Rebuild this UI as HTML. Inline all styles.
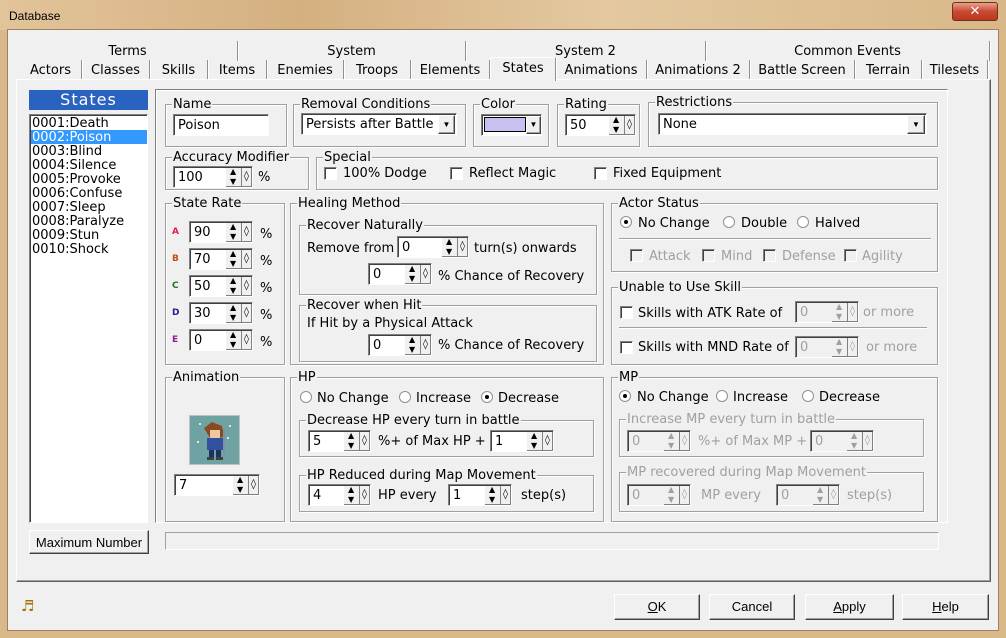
<!DOCTYPE html>
<html><head><meta charset="utf-8"><style>
*{box-sizing:border-box;margin:0;padding:0}
body{width:1006px;height:638px;overflow:hidden;background:#d9b88a;font-family:"DejaVu Sans","Liberation Sans",sans-serif;font-size:13px;color:#000;position:relative}
.a{position:absolute;white-space:nowrap;line-height:16px;margin-top:2px}
.g{position:absolute;border:1px solid #a0a0a0;box-shadow:1px 1px 0 #fff, inset 1px 1px 0 #fff}
.g>.t{position:absolute;top:-8px;left:6px;background:#f0f0f0;padding:0 1px;line-height:16px;white-space:nowrap}
.in{position:absolute;background:#fff;border:1px solid;border-color:#808080 #fff #fff #808080;box-shadow:inset 1px 1px 0 #404040;height:22px;line-height:19px;padding-left:4px;padding-top:1px;white-space:nowrap}
.sp{position:absolute;background:#fff;border:1px solid;border-color:#808080 #fff #fff #808080;box-shadow:inset 1px 1px 0 #404040;height:22px;line-height:20px;padding-left:4px;padding-top:1px}
.sp .ar{position:absolute;right:10px;top:1px;width:16px;height:19px;background:#f0f0f0;border-right:1px solid #808080;border-bottom:1px solid #808080}
.sp .ar:before{content:"▲";position:absolute;left:4px;top:-6px;font-size:8px}
.sp .ar:after{content:"▼";position:absolute;left:4px;top:4px;font-size:8px}
.sp .dm{position:absolute;right:0;top:1px;width:10px;height:19px;background:#f0f0f0;border-right:1px solid #808080;border-bottom:1px solid #808080;font-size:10px;line-height:17px;text-align:center;font-style:normal}
.dis{color:#a0a0a0}
.sp.dis{background:#f0f0f0}
.cb{position:absolute;width:13px;height:13px;background:#fff;border:1px solid;border-color:#808080 #fff #fff #808080;box-shadow:inset 1px 1px 0 #404040}
.cb.dis{background:#f0f0f0}
.rd{position:absolute;width:12px;height:12px;border-radius:50%;background:#fff;border:1px solid #909090}
.rd.on:after{content:"";position:absolute;left:3px;top:3px;width:4px;height:4px;border-radius:50%;background:#000}
.btn{position:absolute;background:#f0f0f0;border:1px solid;border-color:#fff #404040 #404040 #fff;box-shadow:inset -1px -1px 0 #a0a0a0;text-align:center;line-height:24px;font-family:"Liberation Sans",sans-serif;font-size:13px}
.tab{position:absolute;text-align:center;line-height:18px;border-right:1px solid #909090;box-shadow:1px 0 0 #fff;padding-top:2px}
.sep{position:absolute;height:2px;border-top:1px solid #a0a0a0;border-bottom:1px solid #fff}
</style></head><body>
<div style="position:absolute;left:0;top:0;width:1006px;height:30px;background:linear-gradient(90deg,#e2c49a,#d4b080 30%,#e4c8a0 60%,#d8b888)"></div>
<div class="a" style="left:9px;top:6px;font-family:'Liberation Sans',sans-serif;font-size:12px">Database</div>
<div style="position:absolute;left:952px;top:2px;width:46px;height:19px;border-radius:3px;background:linear-gradient(#e8a090,#c84a30 50%,#b83820);border:1px solid #703020;color:#fff;text-align:center;font-weight:bold;line-height:17px;font-size:13px">✕</div>
<div style="position:absolute;left:7px;top:29px;width:992px;height:602px;background:#f0f0f0;border:1px solid #a08060"></div>

<div class="tab" style="left:18px;top:41px;width:220px">Terms</div>
<div class="tab" style="left:238px;top:41px;width:228px">System</div>
<div class="tab" style="left:466px;top:41px;width:240px">System 2</div>
<div class="tab" style="left:706px;top:41px;width:284px">Common Events</div>
<div class="tab" style="left:20px;top:60px;width:62px">Actors</div>
<div class="tab" style="left:82px;top:60px;width:68px">Classes</div>
<div class="tab" style="left:150px;top:60px;width:58px">Skills</div>
<div class="tab" style="left:208px;top:60px;width:59px">Items</div>
<div class="tab" style="left:267px;top:60px;width:77px">Enemies</div>
<div class="tab" style="left:344px;top:60px;width:67px">Troops</div>
<div class="tab" style="left:411px;top:60px;width:79px">Elements</div>
<div class="tab" style="left:490px;top:57px;width:66px;background:#f0f0f0;border-left:1px solid #fff;border-top:1px solid #fff;z-index:2;height:24px">States</div>
<div class="tab" style="left:556px;top:60px;width:91px">Animations</div>
<div class="tab" style="left:647px;top:60px;width:103px">Animations 2</div>
<div class="tab" style="left:750px;top:60px;width:105px">Battle Screen</div>
<div class="tab" style="left:855px;top:60px;width:67px">Terrain</div>
<div class="tab" style="left:922px;top:60px;width:66px">Tilesets</div>
<div style="position:absolute;left:16px;top:79px;width:975px;height:503px;border:1px solid;border-color:#fff #606060 #606060 #fff;box-shadow:inset -1px -1px 0 #a0a0a0"></div>

<div style="position:absolute;left:29px;top:90px;width:119px;height:20px;background:#2a62c0;color:#fff;text-align:center;font-size:16px;line-height:20px;letter-spacing:1px">States</div>
<div style="position:absolute;left:29px;top:114px;width:119px;height:409px;background:#fff;border:1px solid;border-color:#808080 #fff #fff #808080;box-shadow:inset 1px 1px 0 #404040"></div>
<div style="position:absolute;left:31px;top:130px;width:116px;height:14px;background:#3399ff"></div>
<div class="a" style="left:32px;top:115px;line-height:14px">0001:Death<br><span style="color:#fff">0002:Poison</span><br>0003:Blind<br>0004:Silence<br>0005:Provoke<br>0006:Confuse<br>0007:Sleep<br>0008:Paralyze<br>0009:Stun<br>0010:Shock</div>
<div class="btn" style="left:29px;top:530px;width:120px;height:24px">Maximum Number</div>

<div style="position:absolute;left:155px;top:89px;width:793px;height:434px;border:1px solid;border-color:#808080 #fff #fff #808080;box-shadow:inset 1px 1px 0 #fff"></div>
<div style="position:absolute;left:165px;top:532px;width:774px;height:18px;border:1px solid;border-color:#a0a0a0 #fff #fff #a0a0a0"></div>

<div class="g" style="left:165px;top:104px;width:122px;height:43px"><span class="t">Name</span></div>
<div class="in" style="left:173px;top:114px;width:96px">Poison</div>
<div class="g" style="left:293px;top:104px;width:173px;height:43px"><span class="t">Removal Conditions</span></div>
<div class="in" style="left:301px;top:113px;width:156px">Persists after Battle</div>
<div class="btn" style="left:438px;top:115px;width:17px;height:19px;line-height:17px;font-size:8px">▼</div>
<div class="g" style="left:473px;top:104px;width:76px;height:43px"><span class="t">Color</span></div>
<div class="in" style="left:481px;top:114px;width:61px"></div>
<div style="position:absolute;left:484px;top:117px;width:42px;height:15px;background:#c8c0f0;border:1px solid #000"></div>
<div class="btn" style="left:526px;top:116px;width:15px;height:18px;line-height:16px;font-size:8px">▼</div>
<div class="g" style="left:557px;top:104px;width:83px;height:43px"><span class="t">Rating</span></div>
<div class="sp" style="left:565px;top:114px;width:71px">50<i class="ar"></i><i class="dm">◊</i></div>
<div class="g" style="left:648px;top:102px;width:290px;height:45px"><span class="t">Restrictions</span></div>
<div class="in" style="left:658px;top:113px;width:269px">None</div>
<div class="btn" style="left:907px;top:115px;width:18px;height:19px;line-height:17px;font-size:8px">▼</div>

<div class="g" style="left:165px;top:157px;width:144px;height:33px"><span class="t">Accuracy Modifier</span></div>
<div class="sp" style="left:173px;top:166px;width:80px">100<i class="ar"></i><i class="dm">◊</i></div>
<div class="a" style="left:258px;top:168px">%</div>
<div class="g" style="left:316px;top:157px;width:622px;height:33px"><span class="t">Special</span></div>
<div class="cb" style="left:324px;top:167px"></div><div class="a" style="left:343px;top:164px">100% Dodge</div>
<div class="cb" style="left:450px;top:167px"></div><div class="a" style="left:469px;top:164px">Reflect Magic</div>
<div class="cb" style="left:594px;top:167px"></div><div class="a" style="left:613px;top:164px">Fixed Equipment</div>

<div class="g" style="left:165px;top:203px;width:120px;height:162px"><span class="t">State Rate</span></div>
<div class="a" style="left:172px;top:222px;font-size:9px;font-weight:bold;color:#e0204a">A</div>
<div class="a" style="left:172px;top:249px;font-size:9px;font-weight:bold;color:#c05010">B</div>
<div class="a" style="left:172px;top:276px;font-size:9px;font-weight:bold;color:#207020">C</div>
<div class="a" style="left:172px;top:303px;font-size:9px;font-weight:bold;color:#202090">D</div>
<div class="a" style="left:172px;top:330px;font-size:9px;font-weight:bold;color:#902090">E</div>
<div class="sp" style="left:189px;top:221px;width:64px">90<i class="ar"></i><i class="dm">◊</i></div>
<div class="sp" style="left:189px;top:248px;width:64px">70<i class="ar"></i><i class="dm">◊</i></div>
<div class="sp" style="left:189px;top:275px;width:64px">50<i class="ar"></i><i class="dm">◊</i></div>
<div class="sp" style="left:189px;top:302px;width:64px">30<i class="ar"></i><i class="dm">◊</i></div>
<div class="sp" style="left:189px;top:329px;width:64px">0<i class="ar"></i><i class="dm">◊</i></div>
<div class="a" style="left:260px;top:225px">%</div><div class="a" style="left:260px;top:252px">%</div><div class="a" style="left:260px;top:279px">%</div><div class="a" style="left:260px;top:306px">%</div><div class="a" style="left:260px;top:333px">%</div>

<div class="g" style="left:290px;top:203px;width:314px;height:162px"><span class="t">Healing Method</span></div>
<div class="g" style="left:299px;top:225px;width:298px;height:70px"><span class="t">Recover Naturally</span></div>
<div class="a" style="left:307px;top:239px">Remove from</div>
<div class="sp" style="left:397px;top:236px;width:72px">0<i class="ar"></i><i class="dm">◊</i></div>
<div class="a" style="left:474px;top:239px">turn(s) onwards</div>
<div class="sp" style="left:368px;top:263px;width:64px">0<i class="ar"></i><i class="dm">◊</i></div>
<div class="a" style="left:438px;top:267px">% Chance of Recovery</div>
<div class="g" style="left:299px;top:305px;width:298px;height:57px"><span class="t">Recover when Hit</span></div>
<div class="a" style="left:307px;top:314px">If Hit by a Physical Attack</div>
<div class="sp" style="left:368px;top:334px;width:64px">0<i class="ar"></i><i class="dm">◊</i></div>
<div class="a" style="left:438px;top:336px">% Chance of Recovery</div>

<div class="g" style="left:611px;top:203px;width:327px;height:69px"><span class="t">Actor Status</span></div>
<div class="rd on" style="left:620px;top:216px"></div><div class="a" style="left:638px;top:214px">No Change</div>
<div class="rd" style="left:723px;top:216px"></div><div class="a" style="left:741px;top:214px">Double</div>
<div class="rd" style="left:797px;top:216px"></div><div class="a" style="left:815px;top:214px">Halved</div>
<div class="sep" style="left:619px;top:238px;width:312px"></div>
<div class="cb dis" style="left:630px;top:249px"></div><div class="a dis" style="left:649px;top:247px">Attack</div>
<div class="cb dis" style="left:702px;top:249px"></div><div class="a dis" style="left:721px;top:247px">Mind</div>
<div class="cb dis" style="left:763px;top:249px"></div><div class="a dis" style="left:782px;top:247px">Defense</div>
<div class="cb dis" style="left:844px;top:249px"></div><div class="a dis" style="left:862px;top:247px">Agility</div>

<div class="g" style="left:611px;top:287px;width:327px;height:78px"><span class="t">Unable to Use Skill</span></div>
<div class="cb" style="left:620px;top:306px"></div><div class="a" style="left:638px;top:304px">Skills with ATK Rate of</div>
<div class="sp dis" style="left:795px;top:301px;width:64px">0<i class="ar"></i><i class="dm">◊</i></div>
<div class="a dis" style="left:863px;top:303px">or more</div>
<div class="sep" style="left:619px;top:327px;width:308px"></div>
<div class="cb" style="left:620px;top:341px"></div><div class="a" style="left:638px;top:338px">Skills with MND Rate of</div>
<div class="sp dis" style="left:795px;top:336px;width:64px">0<i class="ar"></i><i class="dm">◊</i></div>
<div class="a dis" style="left:866px;top:338px">or more</div>

<div class="g" style="left:165px;top:377px;width:120px;height:145px"><span class="t">Animation</span></div>
<div style="position:absolute;left:189px;top:415px;width:51px;height:50px;background:#6fa3a3;border:1px solid #c0c0c0">
<svg width="49" height="48" viewBox="0 0 49 48"><path d="M14 12 L22 6 L32 10 L34 20 L30 22 L20 22 Z" fill="#8a4a20"/><rect x="20" y="14" width="10" height="8" fill="#f0c8a0"/><rect x="17" y="22" width="16" height="12" fill="#3050a0"/><rect x="19" y="34" width="5" height="8" fill="#203060"/><rect x="26" y="34" width="5" height="8" fill="#203060"/><rect x="17" y="41" width="7" height="3" fill="#404040"/><rect x="26" y="41" width="7" height="3" fill="#404040"/><rect x="33" y="14" width="2" height="24" fill="#8090a0"/><circle cx="10" cy="8" r="1" fill="#fff"/><circle cx="40" cy="10" r="1" fill="#fff"/><circle cx="38" cy="22" r="1" fill="#fff"/><circle cx="8" cy="26" r="1" fill="#fff"/></svg></div>
<div class="sp" style="left:174px;top:474px;width:86px">7<i class="ar"></i><i class="dm">◊</i></div>

<div class="g" style="left:290px;top:377px;width:314px;height:145px"><span class="t">HP</span></div>
<div class="rd" style="left:300px;top:391px"></div><div class="a" style="left:317px;top:389px">No Change</div>
<div class="rd" style="left:399px;top:391px"></div><div class="a" style="left:416px;top:389px">Increase</div>
<div class="rd on" style="left:481px;top:391px"></div><div class="a" style="left:498px;top:389px">Decrease</div>
<div class="g" style="left:299px;top:420px;width:295px;height:37px"><span class="t">Decrease HP every turn in battle</span></div>
<div class="sp" style="left:308px;top:430px;width:63px">5<i class="ar"></i><i class="dm">◊</i></div>
<div class="a" style="left:378px;top:432px">%+ of Max HP +</div>
<div class="sp" style="left:490px;top:430px;width:64px">1<i class="ar"></i><i class="dm">◊</i></div>
<div class="g" style="left:299px;top:475px;width:295px;height:37px"><span class="t">HP Reduced during Map Movement</span></div>
<div class="sp" style="left:308px;top:484px;width:63px">4<i class="ar"></i><i class="dm">◊</i></div>
<div class="a" style="left:378px;top:486px">HP every</div>
<div class="sp" style="left:448px;top:484px;width:64px">1<i class="ar"></i><i class="dm">◊</i></div>
<div class="a" style="left:521px;top:486px">step(s)</div>

<div class="g" style="left:611px;top:377px;width:327px;height:145px"><span class="t">MP</span></div>
<div class="rd on" style="left:619px;top:390px"></div><div class="a" style="left:637px;top:388px">No Change</div>
<div class="rd" style="left:716px;top:390px"></div><div class="a" style="left:733px;top:388px">Increase</div>
<div class="rd" style="left:802px;top:390px"></div><div class="a" style="left:819px;top:388px">Decrease</div>
<div class="g" style="left:619px;top:419px;width:305px;height:38px"><span class="t dis">Increase MP every turn in battle</span></div>
<div class="sp dis" style="left:627px;top:430px;width:64px">0<i class="ar"></i><i class="dm">◊</i></div>
<div class="a dis" style="left:698px;top:432px">%+ of Max MP +</div>
<div class="sp dis" style="left:810px;top:430px;width:64px">0<i class="ar"></i><i class="dm">◊</i></div>
<div class="g" style="left:619px;top:472px;width:305px;height:40px"><span class="t dis">MP recovered during Map Movement</span></div>
<div class="sp dis" style="left:627px;top:484px;width:64px">0<i class="ar"></i><i class="dm">◊</i></div>
<div class="a dis" style="left:701px;top:486px">MP every</div>
<div class="sp dis" style="left:776px;top:484px;width:64px">0<i class="ar"></i><i class="dm">◊</i></div>
<div class="a dis" style="left:847px;top:486px">step(s)</div>

<div class="a" style="left:21px;top:596px;font-size:15px;color:#a07000">♬</div>
<div class="btn" style="left:614px;top:594px;width:86px;height:26px"><u>O</u>K</div>
<div class="btn" style="left:709px;top:594px;width:86px;height:26px">Cancel</div>
<div class="btn" style="left:805px;top:594px;width:89px;height:26px"><u>A</u>pply</div>
<div class="btn" style="left:902px;top:594px;width:87px;height:26px"><u>H</u>elp</div>
</body></html>
